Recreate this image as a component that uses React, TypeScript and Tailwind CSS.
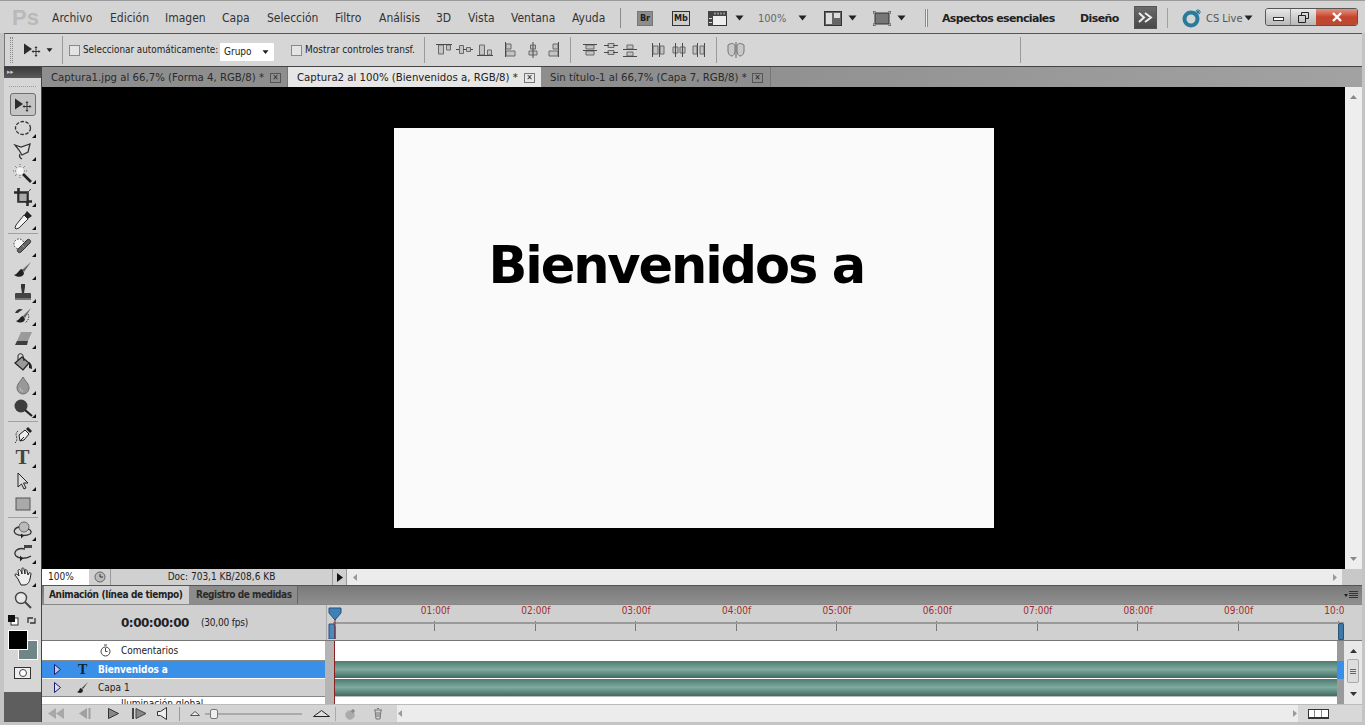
// App.tsx
import type { ReactNode } from 'react';

const menuItems = [
  { label: 'Archivo', width: 'w-[58px]' },
  { label: 'Edición', width: 'w-[55px]' },
  { label: 'Imagen', width: 'w-[57px]' },
  { label: 'Capa', width: 'w-[45px]' },
  { label: 'Selección', width: 'w-[68px]' },
  { label: 'Filtro', width: 'w-[44px]' },
  { label: 'Análisis', width: 'w-[57px]' },
  { label: '3D', width: 'w-[32px]' },
  { label: 'Vista', width: 'w-[43px]' },
  { label: 'Ventana', width: 'w-[61px]' },
  { label: 'Ayuda', width: 'w-[48px]' },
];

const rulerLabels = ['01:00f', '02:00f', '03:00f', '04:00f', '05:00f', '06:00f', '07:00f', '08:00f', '09:00f', '10:00f'];

const Caret = ({ className = '' }: { className?: string }) => (
  <svg width="9" height="6" viewBox="0 0 9 6" className={className}>
    <path d="M0.5 0.5h8L4.5 5.5z" fill="#222" />
  </svg>
);

// little corner triangle on tools that hold a flyout
const Tool = ({ children, flyout = true, active = false }: { children: ReactNode; flyout?: boolean; active?: boolean }) => (
  <div className={`relative h-[23px] w-[26px] shrink-0 flex items-center justify-center ${active ? 'border border-[#6f6f6f] rounded-[3px] bg-[#c4c4c4]' : ''}`}>
    {children}
    {flyout && !active && (
      <svg width="4" height="4" viewBox="0 0 4 4" className="absolute right-0 bottom-[1px]">
        <path d="M4 0v4H0z" fill="#111" />
      </svg>
    )}
  </div>
);

const Ico = ({ children, w = 20, h = 20 }: { children: ReactNode; w?: number; h?: number }) => (
  <svg width={w} height={h} viewBox={`0 0 ${w} ${h}`}>{children}</svg>
);

const MoveIcon = () => (
  <Ico w={20} h={14}>
    <path d="M2 0.5v11l8-5.5z" fill="#2b2b2b" />
    <path d="M14 4v9M10 8.5h8" stroke="#333" strokeWidth="1" fill="none" />
    <path d="M14 3l-1.5 2h3zM14 14l-1.5-2h3zM9.5 8.5l2-1.5v3zM18.500 8.500l-2-1.500v3z" fill="#333" />
  </Ico>
);

const Sep = () => <div className="w-[30px] h-px shrink-0 bg-[#a0a0a0] my-[1.5px]" />;

const toolsTop = [
  <Ico key="m"><ellipse cx="10" cy="10" rx="7.500" ry="6.500" fill="none" stroke="#333" strokeWidth="1.300" strokeDasharray="3.500 1.500" /></Ico>,
  <Ico key="l"><path d="M2 4l6 2 9-3-2 8-6 3-3-5z" fill="#ddd" stroke="#333" strokeWidth="1.300" /><path d="M7 13c-1 2 0 4 2 5" stroke="#333" strokeWidth="1.200" fill="none" /></Ico>,
  <Ico key="w"><path d="M10 10l8 8" stroke="#222" strokeWidth="2.600" /><circle cx="7" cy="7" r="3.500" fill="#f4f4f4" /><path d="M7 0v3M7 11v3M0 7h3M11 7h3M2 2l2 2M12 2l-2 2M2 12l2-2" stroke="#666" strokeWidth="1" strokeDasharray="1 1" /></Ico>,
  <Ico key="c"><path d="M5.500 1v13.500H19M1 5.500h13.500V19" fill="none" stroke="#2a2a2a" strokeWidth="2.600" /><path d="M5 15L18 2" stroke="#444" strokeWidth="1" /><path d="M6.500 7h7v7h-7z" fill="#aaa" /></Ico>,
  <Ico key="e"><path d="M14 1l5 5-3 2-1 1-4-4 1-1z" fill="#222" /><path d="M11 5l4 4-9 9-3 1-1-1 1-3z" fill="#f2f2f2" stroke="#333" strokeWidth="1" /></Ico>,
];

const toolsMid = [
  <Ico key="h"><circle cx="6" cy="7" r="5" fill="#f6f6f6" stroke="#333" strokeDasharray="1.500 1.500" /><path d="M5 12L14 3c2-2 5 1 3 3l-9 9c-2 2-5-1-3-3z" fill="#666" stroke="#333" /><path d="M9 8l4 4" stroke="#bbb" strokeDasharray="1 1" /></Ico>,
  <Ico key="b"><path d="M18 2l-9 8 2 2z" fill="#666" /><path d="M9 9c-3 0-4 5-8 6 4 3 10 2 10-2z" fill="#222" /></Ico>,
  <Ico key="s"><path d="M8 1h4v3l-1 6h-2L8 4z" fill="#333" /><path d="M3 10h14a1 1 0 0 1 1 1v4H2v-4a1 1 0 0 1 1-1z" fill="#444" /><rect x="2" y="15" width="16" height="2" fill="#777" /></Ico>,
  <Ico key="y"><path d="M18 2l-8 8 2 2z" fill="#666" /><path d="M10 10c-3 0-3 4-7 5 4 3 9 1 9-2z" fill="#222" /><path d="M2 7c2-4 5-5 8-3-2 0-4 2-5 3z" fill="#333" /><path d="M15 8c2 3 0 7-3 9" fill="none" stroke="#444" strokeDasharray="1.500 1" /></Ico>,
  <Ico key="r"><path d="M8 3h11l-4 9-12 3 1-3z" fill="#9a9a9a" /><path d="M4 12h11l-1 4H2z" fill="#3e3e3e" /></Ico>,
  <Ico key="k"><path d="M2 11L9 5l7 6-6 7z" fill="#999" stroke="#222" strokeWidth="1.200" /><path d="M5 8V4c0-3 5-3 5 0l1 5" fill="none" stroke="#222" /><path d="M16 10c2 1 3 3 3 7l-3-1z" fill="#222" /></Ico>,
  <Ico key="d"><path d="M10 2c3 5 6 7 6 11a6 6 0 0 1-12 0c0-4 3-6 6-11z" fill="#999" stroke="#6e6e6e" /><path d="M7 13c0 2 1 3 3 3" stroke="#ccc" fill="none" /></Ico>,
  <Ico key="o"><circle cx="8" cy="8" r="6.500" fill="#3e3e3e" /><path d="M12 12l7 6" stroke="#222" strokeWidth="2.200" /></Ico>,
];

const toolsLow = [
  <Ico key="p"><path d="M7 16l-1-6 6-5 4 4-5 6z" fill="#eee" stroke="#222" /><path d="M7 16l4-4" stroke="#222" /><path d="M13 4l2-2 4 4-2 2z" fill="#222" /><path d="M5 6C0 10 7 13 2 18" fill="none" stroke="#333" strokeDasharray="2 1" /></Ico>,
  <span key="t" className="font-['Liberation_Serif',serif] font-bold text-[21px] leading-none text-[#444]">T</span>,
  <Ico key="a"><path d="M5 2v14l3.500-3 2.500 5 2-1-2.500-5H15z" fill="#ddd" stroke="#222" /></Ico>,
  <Ico key="q"><rect x="3" y="4" width="14" height="12" fill="#a9a9a9" stroke="#555" /></Ico>,
];

const tools3d = [
  <Ico key="3a"><circle cx="11" cy="6" r="5" fill="#bbb" stroke="#666" /><path d="M6 6C1 7 0 11 3 13c3 2 11 2 14 0 2-2 1-4-2-5" fill="none" stroke="#333" strokeWidth="1.300" /><path d="M11 14.500l-3 3v-5z" fill="#222" /></Ico>,
  <Ico key="3b"><rect x="11" y="1" width="8" height="3" fill="#444" /><path d="M12 5C4 3 0 8 3 12c3 3 11 3 15 0" fill="none" stroke="#333" strokeWidth="1.300" /><path d="M10 14.500l-3 3v-6z" fill="#222" /></Ico>,
  <Ico key="h2"><path d="M5 12L2 8c0-2 2-1 4 1L5 4c0-2 2-2 3 0l1 3V2c0-2 2-1 2 0l1 5V3c1-1 2 0 2 1l1 4 1-2c1-1 2 0 2 1l-1 5c-1 4-3 6-6 6H8z" fill="#eee" stroke="#222" /></Ico>,
  <Ico key="z"><circle cx="8" cy="8" r="5.500" fill="#e8e8e8" stroke="#444" strokeWidth="1.400" /><path d="M12 12l6 6" stroke="#444" strokeWidth="2" /></Ico>,
];

// align/distribute buttons of the options bar: guide lines, then the two boxes
const AlignIcon = ({ lines, boxes }: { lines: string; boxes: string }) => (
  <svg width="18" height="16" viewBox="0 0 18 16" className="shrink-0">
    <path d={boxes} fill="#c4c4c4" stroke="#6a6a6a" strokeWidth="1" />
    <path d={lines} fill="none" stroke="#4a4a4a" strokeWidth="1" />
  </svg>
);

const alignIcons: { lines: string; boxes: string; width: string; sep?: boolean }[] = [
  { lines: 'M1 2.500h16', boxes: 'M3.500 3h5v9h-5zM11.500 3h4v5h-4z', width: 'w-[20px]' },
  { lines: 'M1 7.500h3M8 7.500h3M15 7.500h3', boxes: 'M4.500 3.500h4v8h-4zM11.500 5.500h4v4h-4z', width: 'w-[21px]' },
  { lines: 'M1 13.500h16', boxes: 'M3.500 3h5v10h-5zM11.500 8h4v5h-4z', width: 'w-[26px]' },
  { lines: 'M3.500 0v15', boxes: 'M4 9h9v5H4zM4 2h5v5H4z', width: 'w-[22px]' },
  { lines: 'M9 0v16', boxes: 'M5 9h8v4H5zM6.500 3h5v4h-5z', width: 'w-[20px]' },
  { lines: 'M14.500 0v15', boxes: 'M5 9h9v5H5zM9 2h5v5H9z', width: 'w-[37px]', sep: true },
  { lines: 'M2 2.500h14M2 8.500h14', boxes: 'M5 3h8v4H5zM5 9h8v4H5z', width: 'w-[21px]' },
  { lines: 'M2 3.500h5M11 3.500h5M2 10.500h5M11 10.500h5', boxes: 'M6 1.500h6v4H6zM6 8.500h6v4H6z', width: 'w-[19px]' },
  { lines: 'M2 7.500h14M2 14.500h14', boxes: 'M6 3h6v4H6zM6 10h6v4H6z', width: 'w-[28px]' },
  { lines: 'M3.500 1v14M10.500 1v14', boxes: 'M4 4h5v8H4zM11 4h4v8h-4z', width: 'w-[21px]' },
  { lines: 'M5.500 1v14M12.500 1v14', boxes: 'M3 5h5v6H3zM10 5h5v6h-5z', width: 'w-[20px]' },
  { lines: 'M7.500 1v14M14.500 1v14', boxes: 'M3 4h4v8H3zM10 4h4v8h-4z', width: 'w-[37px]', sep: true },
];

const Checkbox = () => (
  <div className="w-[11px] h-[11px] border border-[#8a8a8a] bg-[#e4e4e4] shrink-0" />
);

const Track = () => (
  <div className="h-full bg-gradient-to-b from-[#4f7a70] via-[#7fab9f] to-[#3f6a60]" />
);

const App = () => {
  return (
    <div className="w-[1365px] h-[725px] overflow-hidden flex flex-col bg-[#d4d4d4] text-[#222] font-['DejaVu_Sans_Condensed','DejaVu_Sans',sans-serif] text-[11px] leading-none border-t border-[#9a9a9a]">
      {/* Menu bar */}
      <div className="h-[32px] shrink-0 flex items-center relative pt-[2px]">
        <span className="w-[52px] pl-[12px] text-[22px] font-['Liberation_Sans',sans-serif] text-[#b9b9b9] font-bold">Ps</span>
        {menuItems.map((item) => (
          <span key={item.label} className={`${item.width} text-[12px] text-[#333]`}>{item.label}</span>
        ))}
        <div className="w-px h-[20px] bg-[#8a8a8a]" />
        <div className="ml-[16px] w-[16px] h-[15px] bg-[#8d8d8d] border border-[#777] text-[9px] font-bold flex items-center justify-center">Br</div>
        <div className="ml-[19px] w-[18px] h-[15px] border border-[#333] bg-[#ccc] text-[9px] font-bold flex items-center justify-center">Mb</div>
        <svg width="19" height="15" viewBox="0 0 19 15" className="ml-[18px]">
          <rect x="0.500" y="0.500" width="18" height="14" fill="#eee" stroke="#333" />
          <rect x="0" y="0" width="19" height="5" fill="#444" />
          <rect x="0" y="5" width="5" height="10" fill="#444" />
          <path d="M7 1.500v2M10 1.500v2M13 1.500v2M16 1.500v2M1 7.500h3M1 11.500h3" stroke="#ddd" />
        </svg>
        <Caret className="ml-[8px]" />
        <span className="ml-[14px] w-[33px] text-[#666]">100%</span>
        <Caret className="ml-[7px]" />
        <svg width="18" height="15" viewBox="0 0 18 15" className="ml-[17px]">
          <rect x="0.500" y="0.500" width="17" height="14" fill="#666" stroke="#333" />
          <rect x="2" y="2" width="6" height="11" fill="#ddd" />
          <rect x="10" y="2" width="6" height="5" fill="#ddd" />
        </svg>
        <Caret className="ml-[6px]" />
        <svg width="18" height="15" viewBox="0 0 18 15" className="ml-[16px]">
          <rect x="2" y="2" width="14" height="11" fill="#777" stroke="#333" />
          <path d="M0 3V0h3M15 0h3v3M0 12v3h3M15 15h3v-3" fill="none" stroke="#333" />
        </svg>
        <Caret className="ml-[6px]" />
        <div className="ml-[19px] w-[3px] h-[18px] border-x border-[#8a8a8a] bg-[#eee]" />
        <span className="ml-[14px] w-[138px] font-bold text-[11px] font-['DejaVu_Sans',sans-serif] tracking-[-0.65px]">Aspectos esenciales</span>
        <span className="w-[54px] font-bold font-['DejaVu_Sans',sans-serif] tracking-[-0.6px]">Diseño</span>
        <div className="w-[23px] h-[23px] -mt-[2px] bg-gradient-to-b from-[#6a6a6a] to-[#484848] border border-[#555] flex items-center justify-center">
          <svg width="15" height="11" viewBox="0 0 15 11"><path d="M1 1l5 4.500-5 4.500M7 1l6 4.500-6 4.500" fill="none" stroke="#eee" strokeWidth="2" /></svg>
        </div>
        <div className="ml-[10px] w-px h-[20px] bg-[#a0a0a0]" />
        <svg width="20" height="20" viewBox="0 0 20 20" className="ml-[14px]">
          <circle cx="9" cy="11" r="6.500" fill="none" stroke="#2a7a9c" strokeWidth="4" />
          <path d="M16 1v6M13 4h6M14 2l4 4M18 2l-4 4" stroke="#2a7a9c" strokeWidth="1" />
        </svg>
        <span className="ml-[4px] w-[37px] text-[#555]">CS Live</span>
        <Caret className="ml-[1px]" />
        {/* window buttons */}
        <div className="ml-[12px] -mt-[2px] flex h-[18px] rounded-[3px] border border-[#555] overflow-hidden">
          <div className="w-[25px] bg-gradient-to-b from-[#e8e8e8] to-[#b8b8b8] border-r border-[#888] flex items-center justify-center">
            <div className="w-[11px] h-[4px] border border-[#333] bg-white mt-[4px]" />
          </div>
          <div className="w-[25px] bg-gradient-to-b from-[#e8e8e8] to-[#b8b8b8] flex items-center justify-center">
            <svg width="11" height="11" viewBox="0 0 11 11"><path d="M3.500 3V0.500h7v6H8M0.500 3.500h7v7h-7z" fill="none" stroke="#222" /></svg>
          </div>
          <div className="w-[41px] bg-gradient-to-b from-[#e0917f] via-[#c5452e] to-[#b84a36] flex items-center justify-center">
            <svg width="12" height="10" viewBox="0 0 12 10"><path d="M2 1l8 8M10 1L2 9" stroke="#fff" strokeWidth="2.400" /></svg>
          </div>
        </div>
      </div>

      {/* Everything below sits inside the window frame */}
      <div className="flex-1 min-h-0 flex flex-col pl-[4px] pr-[3px] pb-[3px] bg-[#c4c4c4]">
        {/* Options bar */}
        <div className="h-[33px] shrink-0 flex items-center bg-[#d6d6d6] border-t border-[#555] border-l border-l-[#777] text-[10px]">
          <div className="ml-[5px] w-[3px] h-[26px] border-x border-dotted border-[#888]" />
          <div className="ml-[9px]"><MoveIcon /></div>
          <Caret className="ml-[3px] scale-75" />
          <div className="ml-[8px] w-px h-[28px] bg-[#9a9a9a]" />
          <div className="ml-[6px]"><Checkbox /></div>
          <span className="ml-[3px] w-[137px] whitespace-nowrap text-[9.8px]">Seleccionar automáticamente:</span>
          <div className="w-[54px] h-[18px] bg-white flex items-center justify-between px-[4px] mt-[3px]">
            <span>Grupo</span>
            <Caret className="scale-75" />
          </div>
          <div className="ml-[17px]"><Checkbox /></div>
          <span className="ml-[3px] w-[119px] whitespace-nowrap">Mostrar controles transf.</span>
          <div className="w-px h-[26px] bg-[#9a9a9a]" />
          <div className="flex items-center pl-[10px]">
            {alignIcons.map((icon, i) => (
              <div key={i} className={`${icon.width} flex items-center`}>
                <AlignIcon lines={icon.lines} boxes={icon.boxes} />
                {icon.sep && <div className="ml-[8px] w-px h-[26px] bg-[#9a9a9a]" />}
              </div>
            ))}
            <svg width="18" height="16" viewBox="0 0 18 16">
              <path d="M1 3c3-2 5-2 7 0v6c0 3-2 5-3 5-2 0-4-2-4-5z" fill="#c8c8c8" stroke="#777" />
              <path d="M10 3c2-2 4-2 7 0v6c0 3-2 5-4 5-1 0-3-2-3-5z" fill="#c8c8c8" stroke="#777" />
              <path d="M9 0v16" stroke="#666" />
            </svg>
          </div>
          <div className="ml-[275px] w-px h-[26px] bg-[#9a9a9a]" />
        </div>

        {/* Tools + document + panels */}
        <div className="flex-1 min-h-0 flex border-t border-[#444]">
          {/* Tools column */}
          <div className="w-[38px] shrink-0 flex flex-col bg-[#d6d6d6] border-r border-[#444]">
            <div className="h-[11px] shrink-0 bg-gradient-to-b from-[#3a3a3a] to-[#5a5a5a] flex items-center pl-[3px] text-[7px] text-[#ccc]">▸▸</div>
            <div className="h-[9px] shrink-0 mx-[5px] border-b border-dotted border-[#999] mb-[6px]" />
            <div className="flex flex-col items-center flex-1 min-h-0">
              <Tool active flyout={false}><MoveIcon /></Tool>
              {toolsTop.map((icon, i) => <Tool key={i}>{icon}</Tool>)}
              <Sep />
              {toolsMid.map((icon, i) => <Tool key={i}>{icon}</Tool>)}
              <Sep />
              {toolsLow.map((icon, i) => <Tool key={i}>{icon}</Tool>)}
              <Sep />
              {tools3d.map((icon, i) => <Tool key={i} flyout={i < 3}>{icon}</Tool>)}
              {/* colours */}
              <div className="w-full h-[16px] shrink-0 flex items-center justify-between px-[4px] mt-[1px]">
                <svg width="11" height="11" viewBox="0 0 11 11"><rect x="3" y="3" width="7" height="7" fill="#fff" stroke="#333" /><rect x="0" y="0" width="7" height="7" fill="#111" /></svg>
                <svg width="11" height="11" viewBox="0 0 11 11"><path d="M2 8V3h5M9 3v5H4" fill="none" stroke="#333" strokeWidth="1.300" /></svg>
              </div>
              <div className="relative w-[30px] h-[30px] shrink-0 mt-[2px] self-start ml-[4px]">
                <div className="absolute right-0 bottom-0 w-[20px] h-[20px] bg-[#6f8588] border border-white" />
                <div className="absolute left-0 top-0 w-[20px] h-[20px] bg-black border border-white" />
              </div>
              <div className="mt-[7px] w-[17px] h-[12px] shrink-0 bg-[#eee] border border-[#333] flex items-center justify-center">
                <div className="w-[8px] h-[8px] rounded-full border border-[#444] bg-white" />
              </div>
              <div className="mt-auto w-full h-[30px] shrink-0 bg-[#5e5e5e]" />
            </div>
          </div>

          {/* Right column */}
          <div className="flex-1 min-w-0 flex flex-col">
            {/* Document tabs */}
            <div className="h-[20px] shrink-0 flex bg-gradient-to-r from-[#7c7c7c] to-[#a2a2a2] whitespace-nowrap text-[11.3px]">
              <div className="w-[246px] pl-[9px] pt-[1px] flex items-center gap-[5px] bg-[#8e8e8e] border-r border-[#777] text-[#2a2a2a]">
                <span className="w-[214px]">Captura1.jpg al 66,7% (Forma 4, RGB/8) *</span>
                <div className="w-[11px] h-[10px] border border-[#555] text-[8px] flex items-center justify-center">✕</div>
              </div>
              <div className="w-[253px] pl-[9px] pt-[1px] flex items-center gap-[5px] bg-[#e6e6e6] text-[#222]">
                <span className="w-[222px]">Captura2 al 100% (Bienvenidos a, RGB/8) *</span>
                <div className="w-[11px] h-[10px] border border-[#777] text-[8px] flex items-center justify-center">✕</div>
              </div>
              <div className="w-[230px] pl-[9px] pt-[1px] flex items-center gap-[5px] bg-[#8e8e8e] border-r border-[#777] text-[#2a2a2a]">
                <span className="w-[197px]">Sin título-1 al 66,7% (Capa 7, RGB/8) *</span>
                <div className="w-[11px] h-[10px] border border-[#555] text-[8px] flex items-center justify-center">✕</div>
              </div>
            </div>

            {/* Canvas + vertical scrollbar */}
            <div className="h-[482px] shrink-0 flex">
              <div className="flex-1 bg-black flex items-center justify-center">
                <div className="w-[600px] h-[400px] bg-[#fafafa] pt-[110px] pl-[95px]">
                  <span className="font-['DejaVu_Sans',sans-serif] font-bold text-[51px] leading-[56px] tracking-[-2.1px] text-black whitespace-nowrap">Bienvenidos a</span>
                </div>
              </div>
              <div className="w-[17px] bg-[#eeeeee] flex flex-col items-center justify-between py-[8px]">
                <svg width="7" height="4" viewBox="0 0 7 4"><path d="M0 4h7L3.500 0z" fill="#888" /></svg>
                <svg width="7" height="4" viewBox="0 0 7 4"><path d="M0 0h7L3.500 4z" fill="#888" /></svg>
              </div>
            </div>

            {/* Status bar */}
            <div className="h-[16px] shrink-0 flex items-stretch bg-[#d0d0d0] text-[10px]">
              <div className="w-[47px] bg-white flex items-center pl-[6px]">100%</div>
              <div className="w-[22px] flex items-center justify-center border-r border-[#999]">
                <svg width="12" height="12" viewBox="0 0 12 12"><circle cx="6" cy="6" r="5" fill="#bbb" stroke="#666" /><path d="M6 3v3h3" stroke="#333" fill="none" /></svg>
              </div>
              <div className="w-[221px] flex items-center justify-center">Doc: 703,1 KB/208,6 KB</div>
              <div className="w-[15px] border-x border-[#999] flex items-center justify-center">
                <svg width="6" height="9" viewBox="0 0 6 9"><path d="M0 0l6 4.500L0 9z" fill="#111" /></svg>
              </div>
              <div className="flex-1 bg-[#ececec] flex items-center justify-between pl-[6px] pr-[5px]">
                <svg width="4" height="7" viewBox="0 0 4 7"><path d="M4 0v7L0 3.500z" fill="#999" /></svg>
                <svg width="4" height="7" viewBox="0 0 4 7"><path d="M0 0v7l4-3.500z" fill="#999" /></svg>
              </div>
              <div className="w-[20px] bg-[#c8c8c8]" />
            </div>

            {/* Timeline panel */}
            <div className="flex-1 min-h-0 flex flex-col border-t border-[#555] bg-[#d0d0d0]">
              <div className="h-[18px] shrink-0 flex bg-gradient-to-b from-[#7a7a7a] to-[#8f8f8f] pl-[2px] whitespace-nowrap">
                <div className="w-[145px] bg-[#d2d2d2] flex items-center pl-[5px] font-bold text-[10px] tracking-[-0.36px]">Animación (línea de tiempo)</div>
                <div className="w-[109px] bg-[#8c8c8c] border-r border-[#666] flex items-center pl-[7px] text-[10px] text-[#2a2a2a] font-bold tracking-[-0.47px]">Registro de medidas</div>
                <div className="ml-auto mr-[4px] flex items-center gap-[1px]">
                  <svg width="4" height="3" viewBox="0 0 4 3"><path d="M0 0h4L2 3z" fill="#222" /></svg>
                  <svg width="9" height="8" viewBox="0 0 9 8"><path d="M0 .5h9M0 2.500h9M0 4.500h9M0 6.500h9" stroke="#333" /></svg>
                </div>
              </div>

              {/* Timeline header */}
              <div className="h-[37px] shrink-0 flex border-t border-[#888] border-b border-b-[#777] pr-[18px]">
                <div className="w-[284px] shrink-0 pl-[79px] flex items-center">
                  <span className="font-['DejaVu_Sans',sans-serif] font-bold text-[12px] tracking-[-0.5px] w-[80px]">0:00:00:00</span>
                  <span className="text-[10px] tracking-[-0.2px]">(30,00 fps)</span>
                </div>
                <div className="flex-1 min-w-0 relative overflow-hidden border-l border-[#aaa] pl-[8px]">
                  <div className="flex h-full w-[1100px]">
                    {rulerLabels.map((label) => (
                      <div key={label} className="w-[100.4px] shrink-0 flex flex-col items-end">
                        <span className="translate-x-1/2 mt-[1px] text-[10px] text-[#a02c2c]">{label}</span>
                        <div className="w-px h-[10px] mt-[5px] bg-[#777]" />
                      </div>
                    ))}
                  </div>
                  {/* work area line + playhead */}
                  <div className="absolute left-[6px] right-0 top-[17px] h-[2px] bg-[#9a9a9a]" />
                  <svg width="14" height="34" viewBox="0 0 14 34" className="absolute left-[1px] top-0">
                    <path d="M1 3h12v5l-6 7-6-7z" fill="#3f80b8" stroke="#27527a" />
                    <path d="M1 19h5l1 3v12H1z" fill="#4f88bc" stroke="#27527a" />
                    <path d="M7 14v20" stroke="#8a2020" />
                  </svg>
                  <div className="absolute right-0 top-[18px] w-[6px] h-[17px] bg-[#3f78a8] border border-[#27527a] rounded-t-[2px]" />
                </div>
              </div>

              {/* Layer rows */}
              <div className="flex-1 min-h-0 flex overflow-hidden">
                <div className="w-[283px] shrink-0 flex flex-col">
                  <div className="h-[20px] shrink-0 bg-white flex items-center border-b border-[#888]">
                    <svg width="11" height="13" viewBox="0 0 11 13" className="ml-[58px]"><circle cx="5.500" cy="7.500" r="4.500" fill="none" stroke="#444" /><path d="M4 1h3M5.500 4v3.500h2" stroke="#444" fill="none" /></svg>
                    <span className="ml-[10px] text-[10px]">Comentarios</span>
                  </div>
                  <div className="h-[18px] shrink-0 bg-[#3a8fe8] flex items-center border-b border-white">
                    <svg width="7" height="11" viewBox="0 0 7 11" className="ml-[12px]"><path d="M.5.500l6 5-6 5z" fill="#bcd" stroke="#1a1a7a" /></svg>
                    <span className="ml-[17px] w-[20px] font-['Liberation_Serif',serif] font-bold text-[14px] text-[#123]">T</span>
                    <span className="font-bold text-[10px] text-white tracking-[-0.1px]">Bienvenidos a</span>
                  </div>
                  <div className="h-[18px] shrink-0 bg-[#d0d0d0] flex items-center border-b border-[#888]">
                    <svg width="7" height="11" viewBox="0 0 7 11" className="ml-[12px]"><path d="M.5.500l6 5-6 5z" fill="#ddd" stroke="#1a1a7a" /></svg>
                    <svg width="13" height="13" viewBox="0 0 13 13" className="ml-[15px]"><path d="M12 1L6 7l1 1z" fill="#333" /><path d="M5 7c-2 0-1 3-4 4 3 2 6 1 6-2z" fill="#222" /></svg>
                    <span className="ml-[9px] text-[10px]">Capa 1</span>
                  </div>
                  <div className="flex-1 min-h-0 bg-white overflow-hidden pl-[79px] text-[10px] pt-[2px] whitespace-nowrap">Iluminación global</div>
                </div>
                <div className="w-[9px] shrink-0 bg-[#b4b4b4]" />
                <div className="flex-1 min-w-0 flex flex-col relative">
                  <div className="h-[20px] shrink-0 bg-white" />
                  <div className="h-[18px] shrink-0 border-b border-white"><Track /></div>
                  <div className="h-[18px] shrink-0 border-b border-[#bbb]"><Track /></div>
                  <div className="flex-1 bg-white" />
                  <div className="absolute left-0 top-0 bottom-0 w-px bg-[#8a2020]" />
                </div>
                <div className="w-[7px] shrink-0 bg-[#9a9a9a] flex flex-col">
                  <div className="mt-[20px] h-[18px] bg-[#3a8fe8]" />
                </div>
                <div className="w-[18px] shrink-0 bg-[#e8e8e8] flex flex-col items-center pt-[8px] relative">
                  <svg width="7" height="4" viewBox="0 0 7 4"><path d="M0 4h7L3.500 0z" fill="#333" /></svg>
                  <div className="mt-[6px] w-[12px] h-[24px] bg-[#ddd] border border-[#aaa] rounded-[2px] flex flex-col items-center justify-center gap-[1px]">
                    <div className="w-[6px] h-px bg-[#666]" /><div className="w-[6px] h-px bg-[#666]" /><div className="w-[6px] h-px bg-[#666]" />
                  </div>
                  <svg width="7" height="4" viewBox="0 0 7 4" className="mt-auto mb-[8px]"><path d="M0 0h7L3.500 4z" fill="#333" /></svg>
                </div>
              </div>

              {/* Transport bar */}
              <div className="h-[18px] shrink-0 flex items-center bg-[#d4d4d4] border-t border-[#bbb]">
                <svg width="18" height="11" viewBox="0 0 18 11" className="ml-[5px]"><path d="M9 0v11L1 5.500zM17 0v11L9 5.500z" fill="#a8a8a8" /></svg>
                <svg width="13" height="11" viewBox="0 0 13 11" className="ml-[13px]"><path d="M9 0v11L1 5.500z" fill="#a0a0a0" /><path d="M11.500 0v11" stroke="#a0a0a0" strokeWidth="2" /></svg>
                <svg width="11" height="11" viewBox="0 0 11 11" className="ml-[17px]"><path d="M0.500 0.500v10l10-5z" fill="#888" stroke="#333" /></svg>
                <svg width="14" height="11" viewBox="0 0 14 11" className="ml-[13px]"><path d="M1 0v11" stroke="#444" strokeWidth="2" /><path d="M4 0.500v10l10-5z" fill="#888" stroke="#444" /></svg>
                <svg width="10" height="13" viewBox="0 0 10 13" className="ml-[11px]"><path d="M0.500 4.500h3l6-4v12l-6-4h-3z" fill="#eee" stroke="#333" /></svg>
                <div className="ml-[12px] w-px h-[14px] bg-[#999]" />
                <svg width="10" height="5" viewBox="0 0 10 5" className="ml-[10px]"><path d="M0.500 4.500l4.500-4 4.500 4z" fill="#eee" stroke="#555" /></svg>
                {/* zoom slider */}
                <div className="ml-[5px] w-[97px] h-[2px] bg-[#aaa] relative">
                  <div className="absolute left-[5px] -top-[4px] w-[8px] h-[10px] bg-[#eee] border border-[#777] rounded-[2px]" />
                </div>
                <svg width="17" height="7" viewBox="0 0 17 7" className="ml-[11px]"><path d="M0.500 6.500l8-6 8 6z" fill="#ddd" stroke="#222" /></svg>
                <div className="ml-[5px] w-px h-[14px] bg-[#aaa]" />
                <svg width="12" height="12" viewBox="0 0 12 12" className="ml-[9px]"><circle cx="5" cy="7" r="4.500" fill="#aaa" stroke="#bbb" /><path d="M8 1v4M6 3h4" stroke="#777" /></svg>
                <svg width="10" height="12" viewBox="0 0 10 12" className="ml-[16px]"><path d="M1 2h8M2 2l1 9h4l1-9M4 0.500h2M4 4v5M6 4v5" fill="none" stroke="#777" /></svg>
                <div className="flex-1 h-full ml-[14px] bg-[#ececec] flex items-center justify-between px-[1px]">
                  <svg width="4" height="7" viewBox="0 0 4 7"><path d="M4 0v7L0 3.500z" fill="#999" /></svg>
                  <svg width="4" height="7" viewBox="0 0 4 7"><path d="M0 0v7l4-3.500z" fill="#999" /></svg>
                </div>
                <div className="w-[64px] h-full bg-[#d8d8d8] flex items-center pl-[10px]">
                  <div className="w-[21px] h-[10px] border border-[#333] border-b-2 bg-white grid grid-cols-3 divide-x divide-[#888]"><div /><div /><div /></div>
                </div>
              </div>
            </div>
          </div>
        </div>
      </div>
    </div>
  );
};

export default App;
